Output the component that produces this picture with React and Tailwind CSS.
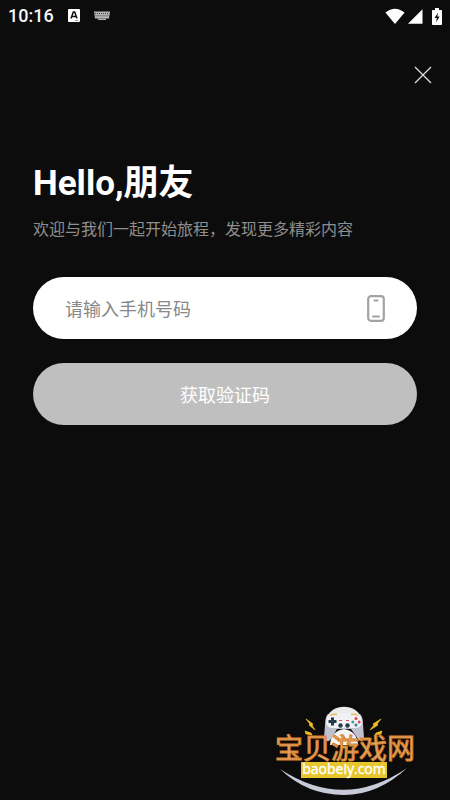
import React from "react";

function StatusBar() {
  return (
    <div className="flex h-8 items-center justify-between px-2">
      <div className="flex items-center">
        <span className="w-[60px] text-[18px] font-medium leading-6 text-[#f4f4f4]">10:16</span>
        <svg className="h-[14px] w-[12px]" viewBox="0 0 12 14" aria-hidden="true">
          <rect width="12" height="13" rx="1" fill="#fff" />
          <path d="M3 9.500 5.300 3h1.400L9 9.500M4 7.500h4" fill="none" stroke="#111" strokeWidth="1.500" />
          <path d="M7 11.500h3.500" stroke="#888" strokeWidth="0.800" />
        </svg>
        <svg className="ml-[14px] h-[10px] w-[16px]" viewBox="0 0 16 10" aria-hidden="true">
          <path d="M0 .5h16L15 7.500H1z" fill="#b5b5b5" />
          <path d="M1 2.500h14M1.500 4.800h13" stroke="#444" strokeWidth="1" strokeDasharray="1 1" />
          <path d="M4 8.300h8" stroke="#aaa" strokeWidth="1.500" />
        </svg>
      </div>
      <div className="flex items-center">
        <svg className="h-4 w-5" viewBox="0 0 20 16" aria-hidden="true">
          <path d="M.4 4.500Q10-3.200 19.600 4.500L10 16z" fill="#fff" />
        </svg>
        <svg className="ml-[3px] h-[15px] w-[15px]" viewBox="0 0 15 15" aria-hidden="true">
          <path d="M14.500.2v14.500H0z" fill="#fff" />
        </svg>
        <svg className="ml-[9px] h-[17px] w-[10px]" viewBox="0 0 10 17" aria-hidden="true">
          <path d="M3 0h4v2h2.200q.8 0 .8.800v13.400q0 .8-.8.800H.8q-.8 0-.8-.8V2.800Q0 2 .8 2H3z" fill="#fff" />
          <path d="M6.200 4.500 2.500 10h2.300L4 14.500 7.600 8.500H5.300z" fill="#111" />
        </svg>
      </div>
    </div>
  );
}

function Watermark() {
  return (
    <svg className="h-[100px] w-[144px]" viewBox="273 700 144 100" role="img" aria-label="宝贝游戏网 baobeiy.com">
      <path d="M280 769Q344 811 407 768Q378 795 344 795Q307 795 280 769z" fill="#c9cad8" />
      <path d="M327 718C331 703 357 703 361 718z" fill="#ececec" />
      <path d="M328 714Q325 717 325 725L324 738Q327 744 331 739L337 729H351L358 739Q362 744 364 738L363 724Q363 717 360 714z" fill="#bfc1cf" />
      <path d="M330 745Q331 731 344 729Q357 731 358 745z" fill="#f4f4f4" />
      <path d="M331 713H357Q362 715 362 723Q361 728 355 728H333Q327 728 326 723Q326 715 331 713z" fill="#f1f1f5" />
      <path d="M330 715.500q3-2 7-1M351 714.500q4-1 7 1" fill="none" stroke="#e9b65b" strokeWidth="1.500" />
      <path d="M332.500 717.500v8M328.500 721.500h8" stroke="#253b49" strokeWidth="3" />
      <circle cx="340.500" cy="725.500" r="2.200" fill="#253b49" />
      <circle cx="347.500" cy="725.500" r="2.200" fill="#253b49" />
      <path d="M339 720.500h3M346 720.500h3" stroke="#d94c59" strokeWidth="1" />
      <circle cx="356" cy="718.500" r="1.500" fill="#e7433f" />
      <circle cx="356" cy="725" r="1.500" fill="#3478a1" />
      <circle cx="352.800" cy="722" r="1.500" fill="#3a9b9c" />
      <circle cx="359.200" cy="722" r="1.500" fill="#d84755" />
      <path d="M306 719l7 5-1 1 3 5-6-5 1-1zM381 719l-8 5 1 1-4 5 8-5-1-1zM305 731l6 2 1 2-6-1zM382 731l-6 2-1 2 6-1z" fill="#f0bd25" stroke="#f0bd25" strokeWidth="0.700" />
      <text x="275" y="759" fontSize="28" fontWeight="400" fill="#d8ad7c" stroke="#dc7f22" strokeWidth="1" className="font-['Noto_Sans_CJK_SC',sans-serif]">宝贝游戏网</text>
      <rect x="301" y="762" width="86" height="16" fill="#e6c62c" />
      <text x="344" y="774" textAnchor="middle" fontSize="14" fontWeight="400" fill="#fff" stroke="#fff" strokeWidth="0.400" className="font-['Open_Sans',sans-serif]">baobeiy.com</text>
    </svg>
  );
}

export default function App() {
  return (
    <div className="flex min-h-screen flex-col bg-[#0c0c0c] font-[Roboto,'Noto_Sans_CJK_SC',sans-serif]">
      <StatusBar />
      <header className="flex justify-end pr-[18px] pt-[34px]">
        <button type="button" aria-label="关闭" className="block">
          <svg className="h-[18px] w-[18px]" viewBox="0 0 18 18" aria-hidden="true">
            <path d="M1 1l16 16M17 1 1 17" stroke="#e2e2e2" strokeWidth="1.200" />
          </svg>
        </button>
      </header>
      <main className="px-[33px] pt-[76px]">
        <h1 className="text-[35px] font-bold leading-[48px] text-white">Hello,朋友</h1>
        <p className="mt-2 font-['Noto_Sans_CJK_SC',sans-serif] text-[16px] leading-6 text-[#8e8e8e]">
          欢迎与我们一起开始旅程，发现更多精彩内容
        </p>
        <form className="mt-[37px] font-['Noto_Sans_CJK_SC',sans-serif] text-[18px] leading-7">
          <div className="flex h-[62px] items-center rounded-full bg-white px-8">
            <input
              type="tel"
              aria-label="手机号码"
              placeholder="请输入手机号码"
              className="h-10 min-w-0 flex-1 bg-transparent text-[#222] outline-none placeholder:text-[#888]"
            />
            <svg className="h-[27px] w-[18px]" viewBox="0 0 18 27" aria-hidden="true">
              <rect x="1.200" y="1.200" width="15.600" height="24.600" rx="2.800" fill="none" stroke="#a3a3a3" strokeWidth="2.200" />
              <path d="M7.500 5.500h3M6 21.500h6" stroke="#a3a3a3" strokeWidth="2" strokeLinecap="round" />
            </svg>
          </div>
          <button type="button" className="mt-6 h-[62px] w-full rounded-full bg-[#bfbfbf] text-white">
            获取验证码
          </button>
        </form>
      </main>
      <footer className="mt-auto flex justify-end pr-[33px]">
        <Watermark />
      </footer>
    </div>
  );
}
